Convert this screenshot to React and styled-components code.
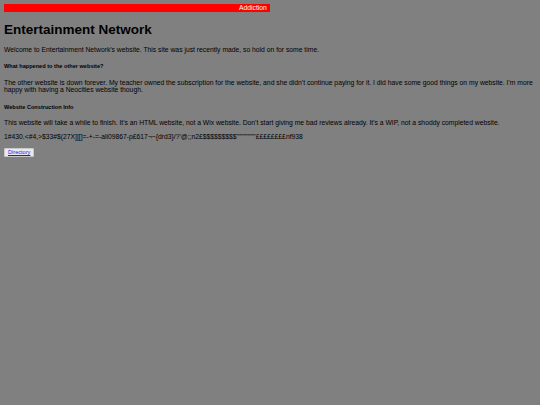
import React from 'react';
import styled, { createGlobalStyle } from 'styled-components';

const GlobalStyle = createGlobalStyle`
  html, body {
    background: #808080;
  }
  body {
    margin: 4px;
    font-family: "Liberation Sans", Arial, sans-serif;
    font-size: 6.78px;
    color: #000;
  }
`;

const Ticker = styled.div`
  width: 266px;
  height: 8px;
  background: #ff0000;
  color: #fff;
  overflow: hidden;
  white-space: nowrap;
  line-height: 8px;
  padding-left: 235px;
  box-sizing: border-box;
`;

const Title = styled.h1`
  font-size: 13.5px;
  font-weight: bold;
  margin: 9.5px 0;
`;

const SubHead = styled.h5`
  font-size: 5.6px;
  font-weight: bold;
  margin: 9.5px 0;
`;

const Para = styled.p`
  margin: 6.6px 0;
  line-height: 1.14;
`;

const DirButton = styled.button`
  font-family: "Liberation Sans", Arial, sans-serif;
  font-size: 5.6px;
  line-height: 6px;
  background: #e9e9ed;
  border: 0.5px solid #c8c8cc;
  border-radius: 1px;
  padding: 0.5px 3px;
  color: #1a1aee;
  text-decoration: underline;
  cursor: pointer;
`;

const gibberish =
  "1#430.<#4,>$33#$(27X][[]=-+-=-ali09867-p£617¬~{drd3}/?'@;;n2£$$$$$$$$$\"\"\"\"\"\"\"\"££££££££nf938";

const App = () => {
  return (
    <>
      <GlobalStyle />
      <Ticker>Addiction</Ticker>
      <Title>Entertainment Network</Title>
      <Para>
        Welcome to Entertainment Network's website. This site was just recently made, so hold on for some time.
      </Para>
      <SubHead>What happened to the other website?</SubHead>
      <Para>
        The other website is down forever. My teacher owned the subscription for the website, and she didn't
        continue paying for it. I did have some good things on my website. I'm more happy with having a
        Neocities website though.
      </Para>
      <SubHead>Website Construction Info</SubHead>
      <Para>
        This website will take a while to finish. It's an HTML website, not a Wix website. Don't start giving me
        bad reviews already. It's a WIP, not a shoddy completed website.
      </Para>
      <Para>{gibberish}</Para>
      <DirButton>Directory</DirButton>
    </>
  );
};

export default App;
